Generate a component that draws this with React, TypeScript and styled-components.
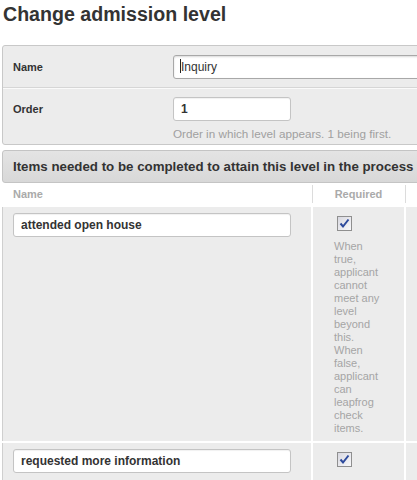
import React from "react";
import styled, { createGlobalStyle } from "styled-components";

const Global = createGlobalStyle`
  html, body { margin: 0; padding: 0; overflow: hidden; background: #fff; }
  body { font-family: "Liberation Sans", Arial, sans-serif; color: #333; }
`;

const Page = styled.div`
  width: 417px;
  height: 480px;
  overflow: hidden;
`;

const Title = styled.h1`
  margin: 0;
  padding: 0 0 0 3px;
  font-size: 19.6px;
  line-height: 28px;
  font-weight: bold;
  color: #333;
  white-space: nowrap;
`;

const FormBox = styled.div`
  margin: 17px 0 0 2px;
  width: 440px;
  border: 1px solid #c8c8c8;
  border-radius: 3px;
  background: #ececec;
`;

const FormRow = styled.div<{ $first?: boolean }>`
  display: flex;
  align-items: flex-start;
  padding: ${(p) => (p.$first ? "9px 0 8px 0" : "8px 0 4px 0")};
  border-top: ${(p) => (p.$first ? "none" : "1px solid #fafafa")};
  border-bottom: ${(p) => (p.$first ? "1px solid #d6d6d6" : "none")};
`;

const Label = styled.div`
  width: 170px;
  flex: none;
  padding-left: 10px;
  box-sizing: border-box;
  font-size: 11px;
  font-weight: bold;
  line-height: 24px;
  color: #333;
`;

const Field = styled.div`
  display: flex;
  flex-direction: column;
  flex: 1;
`;

const TextInput = styled.div<{ $w?: number }>`
  box-sizing: border-box;
  height: 24px;
  width: ${(p) => (p.$w ? `${p.$w}px` : "100%")};
  padding: 0 7px;
  background: #fff;
  border: 1px solid #c4c4c4;
  border-radius: 3px;
  box-shadow: inset 0 1px 1px rgba(0, 0, 0, 0.06);
  font-size: 12px;
  font-weight: bold;
  line-height: 22px;
  color: #333;
  white-space: nowrap;
`;

const FocusInput = styled(TextInput)`
  border-color: #a8a8a8;
  box-shadow: inset 0 1px 2px rgba(0, 0, 0, 0.15);
  font-weight: normal;
  padding-left: 6px;
`;

const Caret = styled.span`
  display: inline-block;
  width: 1px;
  height: 14px;
  background: #222;
  vertical-align: -2px;
`;

const Help = styled.div`
  font-size: 11.7px;
  line-height: 13px;
  color: #a0a0a0;
  margin-top: 6px;
  white-space: nowrap;
`;

const ItemsBox = styled.div`
  margin: 5px 0 0 2px;
  width: 440px;
`;

const ItemsHeader = styled.div`
  box-sizing: border-box;
  height: 33px;
  border: 1px solid #c4c4c4;
  border-radius: 3px;
  background: linear-gradient(#e4e4e4, #d8d8d8);
  padding-left: 10px;
  font-size: 13.3px;
  font-weight: bold;
  line-height: 31px;
  color: #333;
  white-space: nowrap;
`;

const Grid = styled.div`
  display: grid;
  grid-template-columns: 309px 91px 100px;
  column-gap: 2px;
  row-gap: 2px;
`;

const HeadCell = styled.div<{ $center?: boolean; $sep?: boolean }>`
  height: 22px;
  font-size: 11px;
  font-weight: bold;
  line-height: 22px;
  color: #aaa;
  padding-left: ${(p) => (p.$center ? "0" : "11px")};
  text-align: ${(p) => (p.$center ? "center" : "left")};
  position: relative;
  &::after {
    content: "";
    display: ${(p) => (p.$sep ? "block" : "none")};
    position: absolute;
    right: -2px;
    top: 2px;
    bottom: 2px;
    width: 1px;
    background: #dcdcdc;
  }
`;

const Cell = styled.div<{ $first?: boolean }>`
  box-sizing: border-box;
  background: #ececec;
  border-left: ${(p) => (p.$first ? "1px solid #cfcfcf" : "none")};
  padding: ${(p) => (p.$first ? "6px 0 0 10px" : "9px 0 6px 21px")};
  min-height: 40px;
`;

const Check = styled.div`
  width: 15px;
  height: 15px;
  box-sizing: border-box;
  margin-left: 3px;
  border: 1px solid #8f8f8f;
  background: linear-gradient(135deg, #d8d8e0, #f8f8fa);
  display: flex;
  align-items: center;
  justify-content: center;
`;

const CellHelp = styled.div`
  font-size: 11px;
  line-height: 13px;
  color: #a5a5a5;
  width: 50px;
  margin-top: 9px;
`;

const CheckBox = () => (
  <Check>
    <svg width="11" height="11" viewBox="0 0 11 11">
      <path d="M1.5 5.5 L4 8.5 L9.5 1.5" fill="none" stroke="#2d4a9c" strokeWidth="2" />
    </svg>
  </Check>
);

export default function App() {
  return (
    <Page>
      <Global />
      <Title>Change admission level</Title>
      <FormBox>
        <FormRow $first>
          <Label>Name</Label>
          <Field>
            <FocusInput>
              <Caret />
              Inquiry
            </FocusInput>
          </Field>
        </FormRow>
        <FormRow>
          <Label>Order</Label>
          <Field>
            <TextInput $w={118}>1</TextInput>
            <Help>Order in which level appears. 1 being first.</Help>
          </Field>
        </FormRow>
      </FormBox>
      <ItemsBox>
        <ItemsHeader>Items needed to be completed to attain this level in the process</ItemsHeader>
        <Grid>
          <HeadCell $sep>Name</HeadCell>
          <HeadCell $center $sep>Required</HeadCell>
          <HeadCell />
          <Cell $first>
            <TextInput $w={278}>attended open house</TextInput>
          </Cell>
          <Cell>
            <CheckBox />
            <CellHelp>
              When true, applicant cannot meet any level beyond this. When false, applicant can leapfrog check items.
            </CellHelp>
          </Cell>
          <Cell />
          <Cell $first>
            <TextInput $w={278}>requested more information</TextInput>
          </Cell>
          <Cell>
            <CheckBox />
          </Cell>
          <Cell />
        </Grid>
      </ItemsBox>
    </Page>
  );
}
